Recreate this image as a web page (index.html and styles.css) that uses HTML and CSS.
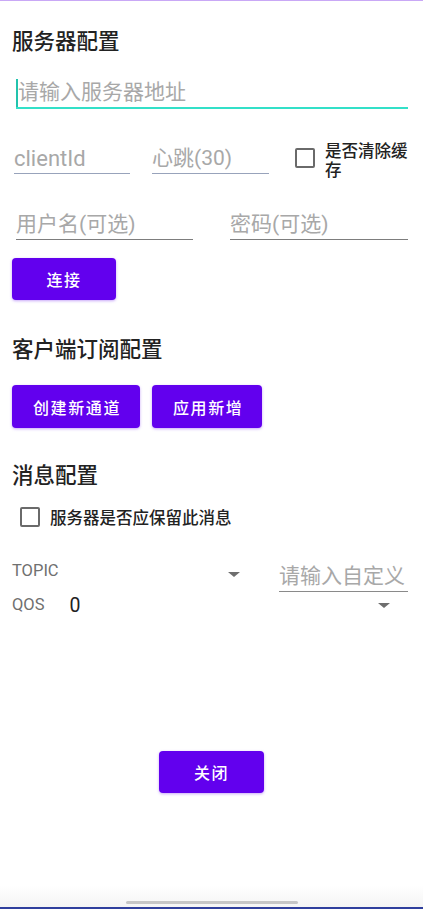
FILE: index.html
```html
<!DOCTYPE html>
<html lang="zh-CN">
<head>
<meta charset="utf-8">
<title>服务器配置</title>
<link rel="stylesheet" href="styles.css">
</head>
<body>
<div class="screen">
  <div class="topline"></div>
  <div class="content">
    <h2 class="heading h-first">服务器配置</h2>
    <div class="field field-server">
      <span class="cursor"></span>
      <span class="placeholder">请输入服务器地址</span>
    </div>

    <div class="row row-client">
      <div class="field field-client"><span class="placeholder">clientId</span></div>
      <div class="field field-beat"><span class="placeholder">心跳(30)</span></div>
      <label class="check check-cache">
        <span class="box"></span>
        <span class="check-label">是否清除缓存</span>
      </label>
    </div>

    <div class="row row-user">
      <div class="field field-user"><span class="placeholder">用户名(可选)</span></div>
      <div class="field field-pass"><span class="placeholder">密码(可选)</span></div>
    </div>

    <button class="btn btn-connect">连接</button>

    <h2 class="heading h-sub">客户端订阅配置</h2>
    <div class="btn-row">
      <button class="btn">创建新通道</button>
      <button class="btn">应用新增</button>
    </div>

    <h2 class="heading h-msg">消息配置</h2>
    <label class="check check-retain">
      <span class="box"></span>
      <span class="check-label">服务器是否应保留此消息</span>
    </label>

    <div class="msg-grid">
      <div class="spinner spinner-topic">
        <span class="spin-label">TOPIC</span>
        <span class="arrow"></span>
      </div>
      <div class="field field-custom"><span class="placeholder">请输入自定义</span></div>
      <div class="spinner spinner-qos">
        <span class="spin-label">QOS</span>
        <span class="spin-value">0</span>
      </div>
      <div class="spinner spinner-extra">
        <span class="arrow"></span>
      </div>
    </div>

    <div class="close-wrap">
      <button class="btn btn-close">关闭</button>
    </div>
  </div>
  <div class="navbar">
    <span class="handle"></span>
  </div>
  <div class="bottomline"></div>
</div>
</body>
</html>
```

FILE: styles.css
```css
* { box-sizing: border-box; }

html, body {
  margin: 0;
  padding: 0;
  background: #ffffff;
}

body {
  font-family: Roboto, "Noto Sans CJK SC", "Noto Sans", sans-serif;
  color: #222222;
}

.screen {
  width: 423px;
  height: 909px;
  display: flex;
  flex-direction: column;
  overflow: hidden;
}

.topline {
  height: 1px;
  background: #c9a8f6;
  flex: none;
}

.content {
  padding: 0 15px 0 12px;
  display: flex;
  flex-direction: column;
  align-items: flex-start;
}

.heading {
  margin: 0;
  font-family: "Noto Sans CJK SC", sans-serif;
  font-size: 21.5px;
  font-weight: 500;
  line-height: 28px;
  height: 28px;
  color: #222222;
}

.h-first { margin-top: 25px; }
.h-sub { margin-top: 34px; }
.h-msg { margin-top: 32px; }

.field {
  display: flex;
  align-items: center;
  height: 30px;
  border-bottom: 1px solid #8e8e8e;
}

.placeholder {
  font-size: 21px;
  line-height: 29px;
  color: #a8a8a8;
  white-space: nowrap;
}

.field-server {
  margin-top: 24px;
  margin-left: 4px;
  width: 392px;
  height: 31px;
  border-bottom: 2px solid #33e0c8;
}

.cursor {
  width: 2px;
  height: 28px;
  background: #22c3ad;
  flex: none;
}

.row {
  display: flex;
  align-items: flex-start;
}

.row-client {
  margin-top: 35px;
  margin-left: 2px;
  height: 30px;
}

.field-client {
  width: 116px;
  border-bottom-color: #98a3bb;
}

.field-client .placeholder {
  font-size: 22px;
}

.field-beat {
  width: 117px;
  margin-left: 22px;
  border-bottom-color: #98a3bb;
}

.check {
  display: flex;
  align-items: flex-start;
}

.box {
  width: 20px;
  height: 20px;
  border: 2px solid #6a6a6a;
  border-radius: 2px;
  flex: none;
}

.check-label {
  font-family: "Noto Sans CJK SC", sans-serif;
  font-size: 16.5px;
  font-weight: 500;
  line-height: 19px;
  color: #222222;
}

.check-cache {
  margin-left: 26px;
  margin-top: -3px;
}

.check-cache .box {
  margin-top: 7px;
}

.check-cache .check-label {
  margin-left: 10px;
  width: 86px;
}

.row-user {
  margin-top: 36px;
  margin-left: 4px;
}

.field-user {
  width: 177px;
  border-bottom-color: #7d7d7d;
}

.field-pass {
  width: 178px;
  margin-left: 37px;
  border-bottom-color: #7d7d7d;
}

.btn {
  font-family: "Noto Sans CJK SC", sans-serif;
  font-size: 16px;
  font-weight: 500;
  letter-spacing: 1.6px;
  color: #ffffff;
  background: #6200ee;
  border: none;
  border-radius: 4px;
  height: 43px;
  padding: 0 19px 0 21px;
  box-shadow: 0 1px 3px rgba(98, 0, 238, 0.35);
  cursor: pointer;
}

.btn-connect {
  margin-top: 18px;
  width: 104px;
  height: 42px;
  padding: 0;
}

.btn-row {
  margin-top: 23px;
  display: flex;
  gap: 12px;
}

.check-retain {
  margin-top: 19px;
  margin-left: 8px;
  align-items: center;
}

.check-retain .check-label {
  margin-left: 10px;
}

.msg-grid {
  margin-top: 35px;
  display: grid;
  grid-template-columns: 233px 129px;
  grid-template-rows: 30px 26px;
  column-gap: 34px;
  width: 396px;
}

.spinner {
  display: flex;
  align-items: center;
}

.spin-label {
  font-size: 16.5px;
  color: #707070;
  line-height: 18px;
}

.spinner-topic {
  align-items: flex-start;
  justify-content: space-between;
  padding-right: 5px;
}

.spinner-topic .arrow {
  margin-top: 10px;
}

.spin-value {
  margin-left: 25px;
  font-size: 19.5px;
  color: #222222;
}

.spinner-extra {
  justify-content: flex-end;
  padding-right: 18px;
}

.arrow {
  width: 0;
  height: 0;
  border-left: 6px solid transparent;
  border-right: 6px solid transparent;
  border-top: 5px solid #6e6e6e;
}

.field-custom {
  height: 30px;
  border-bottom-color: #8a8a8a;
}

.close-wrap {
  align-self: stretch;
  display: flex;
  justify-content: center;
  margin-top: 133px;
  padding-left: 3px;
}

.btn-close {
  width: 105px;
  height: 42px;
  padding: 0;
}

.navbar {
  margin-top: auto;
  height: 22px;
  background: linear-gradient(#ffffff, #f4f4f4);
  display: flex;
  justify-content: center;
  align-items: flex-end;
  padding-bottom: 3px;
  flex: none;
}

.handle {
  width: 172px;
  height: 3px;
  border-radius: 2px;
  background: #c6c6c6;
}

.bottomline {
  height: 2px;
  background: #2f3f9d;
  flex: none;
}
```
